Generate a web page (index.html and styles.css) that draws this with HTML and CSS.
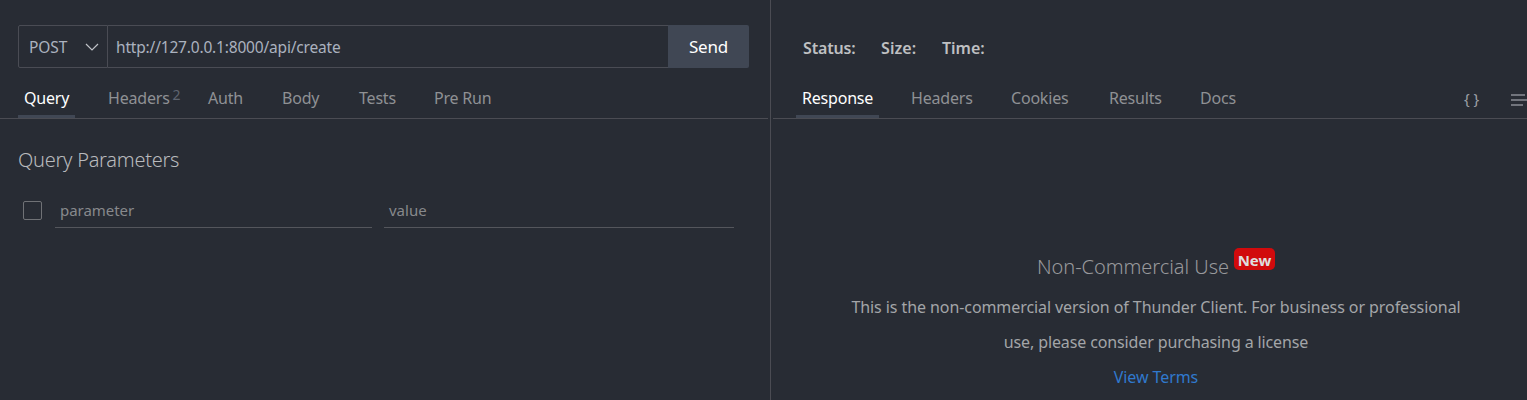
FILE: index.html
```html
<!DOCTYPE html>
<html lang="en">
<head>
<meta charset="utf-8">
<title>Thunder Client</title>
<link rel="stylesheet" href="styles.css">
</head>
<body>
<main class="app">
  <section class="pane request">
    <div class="url-bar">
      <div class="method"><span>POST</span>
        <svg class="chevron" viewBox="0 0 14 8" width="14" height="8"><path d="M1 1l6 6 6-6"/></svg>
      </div>
      <div class="url">http://127.0.0.1:8000/api/create</div>
      <div class="send">Send</div>
    </div>
    <nav class="tabs">
      <span class="tab active t-query">Query</span>
      <span class="tab t-headers">Headers<sup class="count">2</sup></span>
      <span class="tab t-auth">Auth</span>
      <span class="tab t-body">Body</span>
      <span class="tab t-tests">Tests</span>
      <span class="tab t-prerun">Pre Run</span>
    </nav>
    <h2 class="heading">Query Parameters</h2>
    <div class="param-row">
      <span class="checkbox"></span>
      <span class="field name">parameter</span>
      <span class="field value">value</span>
    </div>
  </section>
  <div class="divider"></div>
  <section class="pane response">
    <div class="stats"><span class="s-status">Status:</span><span class="s-size">Size:</span><span>Time:</span></div>
    <nav class="tabs">
      <span class="tab active t-response">Response</span>
      <span class="tab t-rheaders">Headers</span>
      <span class="tab t-cookies">Cookies</span>
      <span class="tab t-results">Results</span>
      <span class="tab t-docs">Docs</span>
      <span class="braces">{ }</span>
      <svg class="menu" viewBox="0 0 18 12" width="18" height="12"><path d="M0 1h14M0 6h18M0 11h12"/></svg>
    </nav>
    <div class="notice">
      <div class="title"><span class="title-text">Non-Commercial Use</span><span class="badge">New</span></div>
      <p class="line first">This is the non-commercial version of Thunder Client. For business or professional</p>
      <p class="line second">use, please consider purchasing a license</p>
      <a class="line terms">View Terms</a>
    </div>
  </section>
</main>
</body>
</html>
```
FILE: styles.css
```css
* { box-sizing: border-box; }
body {
  margin: 0;
  background: #282c34;
  color: #abb2bf;
  font: 16px/24px "Segoe UI", "Noto Sans", "Open Sans", sans-serif;
  overflow: hidden;
}
.app { display: flex; width: 1527px; height: 400px; white-space: nowrap; overflow: hidden; }
.pane { display: flex; flex-direction: column; }
.request { width: 768px; margin-right: 2px; }
.divider { width: 1px; background: #4b4c53; margin-right: 2px; }
.response { width: 754px; }
.url-bar { display: flex; width: 731px; height: 43px; margin: 25px 0 0 18px; }
.method {
  display: flex; align-items: center; justify-content: space-between;
  width: 90px; padding: 0 8px 0 10px;
  border: 1px solid #4a4c54; border-radius: 2px 0 0 2px;
  font-size: 15.5px; letter-spacing: -0.1px;
}
.chevron { fill: none; stroke: #c0c3c8; stroke-width: 1.2; }
.url {
  flex: 1; padding: 9px 8px; border: 1px solid #4a4c54; border-width: 1px 0;
  font-size: 15.5px; letter-spacing: -0.18px;
}
.send {
  width: 81px; background: #404754; color: #fff; text-align: center;
  font-size: 17px; line-height: 43px; letter-spacing: -0.2px; border-radius: 0 2px 2px 0;
}
.tabs { display: flex; height: 37px; margin-top: 14px; border-bottom: 1px solid #4b4c53; }
.tab { flex: none; height: 36px; line-height: 33px; padding-left: 6px; color: #8f9194; font-size: 16px; letter-spacing: -0.2px; }
.active { color: #fff; border-bottom: 3px solid #404754; }
.request .tabs { padding-left: 18px; }
.t-query { width: 57px; margin-right: 27px; }
.t-headers { width: 100px; }
.t-auth { width: 74px; }
.t-body { width: 77px; }
.t-tests { width: 75px; }
.count { font-size: 14px; line-height: 0; color: #5f6570; margin-left: 3px; vertical-align: 4px; }
.heading { margin: 29px 0 0 18px; font-size: 20px; line-height: 24px; font-weight: 300; letter-spacing: -0.27px; color: #b8babd; }
.param-row { display: flex; align-items: flex-start; margin: 23px 0 0 23px; height: 33px; }
.checkbox { width: 19px; height: 19px; margin: 6px 13px 0 0; border: 1px solid #707276; border-radius: 2px; }
.field { height: 33px; padding: 3px 5px; border-bottom: 1px solid #54565c; color: #87898c; font-size: 15px; letter-spacing: -0.05px; }
.name { width: 317px; margin-right: 12px; }
.value { width: 350px; letter-spacing: 0; }
.stats { display: flex; height: 24px; margin: 36px 0 0 30px; color: #bfc0c2; font-weight: 600; letter-spacing: -0.02px; }
.s-status { width: 78px; letter-spacing: -0.15px; }
.s-size { width: 61px; letter-spacing: 0.1px; }
.response .tabs { margin-top: 22px; padding-left: 23px; }
.t-response { width: 83px; margin-right: 26px; }
.t-rheaders { width: 100px; }
.t-cookies { width: 98px; }
.t-results { width: 91px; }
.t-docs { width: 270px; }
.braces { flex: none; width: 47px; line-height: 32px; font-size: 15px; color: #9da0a6; }
.menu { flex: none; margin-top: 12px; fill: none; stroke: #b9bcc4; stroke-width: 1.2; }
.notice { display: flex; flex-direction: column; align-items: center; margin-top: 128px; width: 766px; color: #a3a5a8; }
.title { display: flex; height: 42px; }
.title-text { margin-top: 8px; font-size: 20px; font-weight: 300; letter-spacing: -0.05px; color: #98999c; }
.badge {
  width: 41px; height: 22px; margin: 1px 0 0 5px; border-radius: 5px; background: #d10a0c; color: #dedede;
  text-align: center; font-size: 15px; font-weight: 700; line-height: 24px;
}
.line { margin: 0; height: 35px; line-height: 36px; letter-spacing: -0.08px; }
.second { letter-spacing: -0.12px; }
.terms { color: #3079cd; }
```
